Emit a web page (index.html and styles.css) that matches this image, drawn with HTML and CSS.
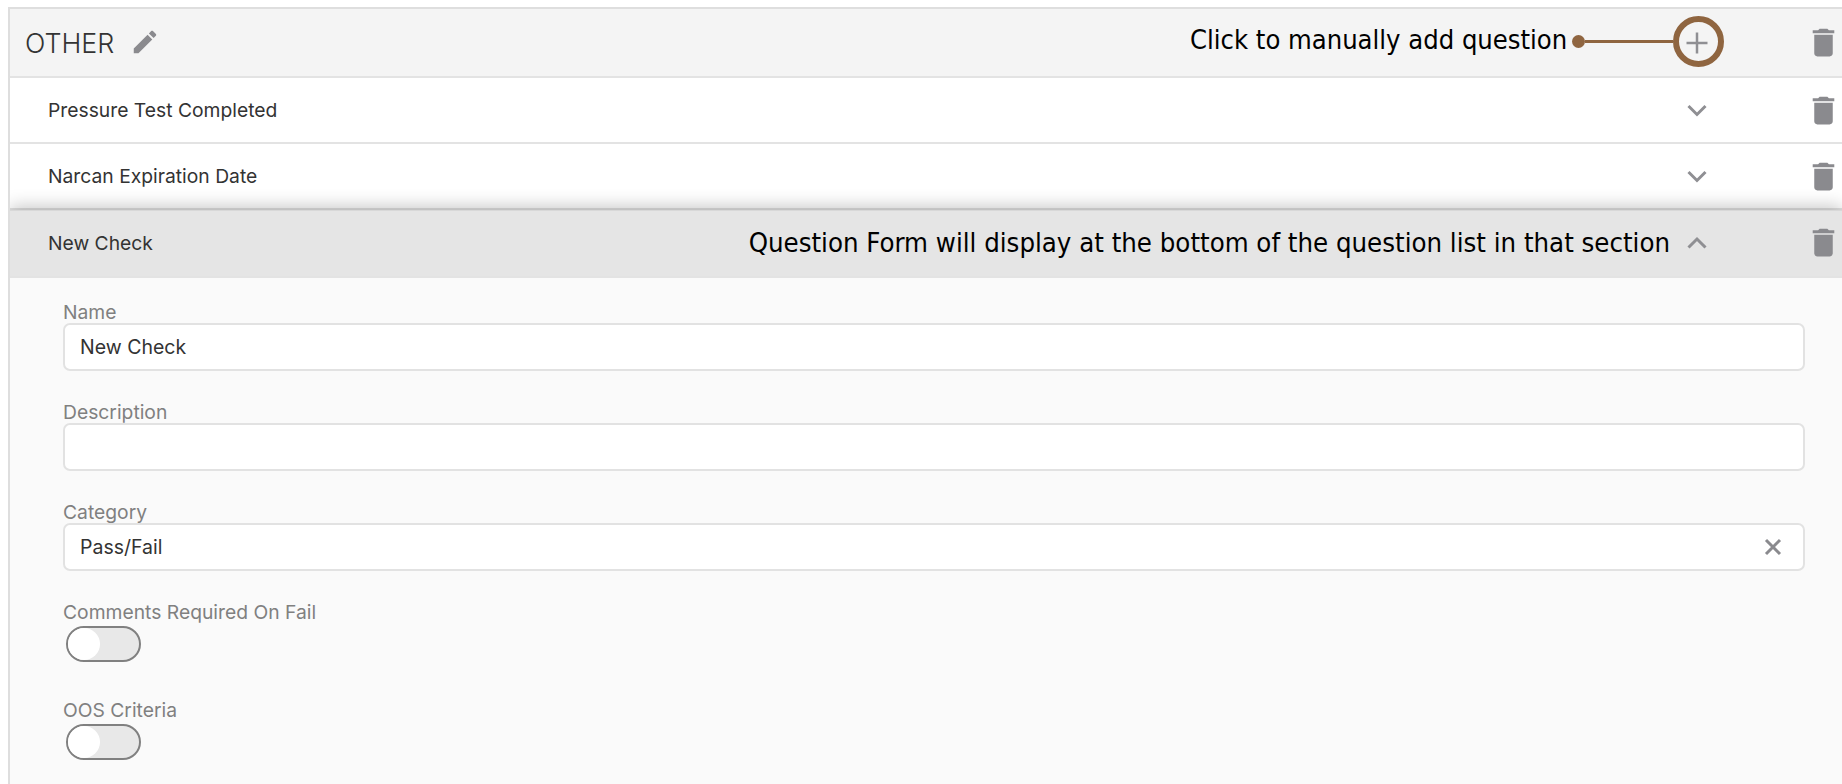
FILE: index.html
```html
<!DOCTYPE html>
<html lang="en">
<head>
    <meta charset="UTF-8">
    <title>Other section</title>
    <link rel="stylesheet" href="styles.css">
</head>
<body>
    <div class="section">
        <!-- Section header -->
        <div class="row row-head">
            <span class="head-title">OTHER</span>
            <svg class="icon-edit" viewBox="0 0 24 24"><path d="M3 17.25V21h3.75L17.81 9.94l-3.75-3.75L3 17.25zM20.71 7.04c.39-.39.39-1.02 0-1.41l-2.34-2.34c-.39-.39-1.02-.39-1.41 0l-1.83 1.83 3.75 3.75 1.83-1.83z"/></svg>
            <span class="spacer"></span>
            <svg class="slot" viewBox="0 0 36 36"><path class="stroke thin" d="M18 7.5v21M7.5 18h21"/></svg>
            <svg class="trash" viewBox="0 0 24 24"><path d="M6 19c0 1.1.9 2 2 2h8c1.1 0 2-.9 2-2V7H6v12zM19 4h-3.5l-1-1h-5l-1 1H5v2h14V4z"/></svg>
        </div>

        <!-- Questions -->
        <div class="row">
            <span class="row-title">Pressure Test Completed</span>
            <span class="spacer"></span>
            <svg class="slot" viewBox="0 0 36 36"><path class="stroke" d="M9.5 14l8.500 8.500 8.500-8.500"/></svg>
            <svg class="trash" viewBox="0 0 24 24"><path d="M6 19c0 1.1.9 2 2 2h8c1.1 0 2-.9 2-2V7H6v12zM19 4h-3.5l-1-1h-5l-1 1H5v2h14V4z"/></svg>
        </div>
        <div class="row">
            <span class="row-title">Narcan Expiration Date</span>
            <span class="spacer"></span>
            <svg class="slot" viewBox="0 0 36 36"><path class="stroke" d="M9.5 14l8.500 8.500 8.500-8.500"/></svg>
            <svg class="trash" viewBox="0 0 24 24"><path d="M6 19c0 1.1.9 2 2 2h8c1.1 0 2-.9 2-2V7H6v12zM19 4h-3.5l-1-1h-5l-1 1H5v2h14V4z"/></svg>
        </div>
        <div class="row row-open">
            <span class="row-title">New Check</span>
            <span class="spacer"></span>
            <span class="note">Question Form will display at the bottom of the question list in that section</span>
            <svg class="slot" viewBox="0 0 36 36"><path class="stroke" d="M9.500 22.500l8.500-8.500 8.500 8.500"/></svg>
            <svg class="trash" viewBox="0 0 24 24"><path d="M6 19c0 1.1.9 2 2 2h8c1.1 0 2-.9 2-2V7H6v12zM19 4h-3.5l-1-1h-5l-1 1H5v2h14V4z"/></svg>
        </div>

        <!-- Question form -->
        <div class="form">
            <div class="field">
                <label class="field-label">Name</label>
                <div class="input">New Check</div>
            </div>
            <div class="field">
                <label class="field-label">Description</label>
                <div class="input"></div>
            </div>
            <div class="field">
                <label class="field-label">Category</label>
                <div class="input">
                    <span class="spacer">Pass/Fail</span>
                    <svg class="icon-clear" viewBox="0 0 18 18"><path d="M2 2l14 14M16 2L2 16"/></svg>
                </div>
            </div>
            <div class="toggle-field">
                <label class="field-label">Comments Required On Fail</label>
                <div class="toggle"><span class="knob"></span></div>
            </div>
            <div class="toggle-field">
                <label class="field-label">OOS Criteria</label>
                <div class="toggle"><span class="knob"></span></div>
            </div>
        </div>
    </div>

    <!-- Callout over the add button -->
    <div class="callout">
        <span class="callout-text">Click to manually add question</span>
        <span class="callout-dot"></span>
        <span class="callout-line"></span>
        <span class="callout-ring"></span>
    </div>
</body>
</html>
```

FILE: styles.css
```css
html, body {
    height: 784px;
    overflow: hidden;
}
body {
    margin: 0;
    padding-top: 7px;
    box-sizing: border-box;
    position: relative;
    background: #fff;
    font-family: Inter, 'Noto Sans', sans-serif;
    color: #333;
}
.section {
    margin-left: 8px;
    border-left: 2px solid #dedede;
    border-top: 2px solid #dedede;
}
.row {
    display: flex;
    align-items: center;
    height: 64px;
    padding-left: 38px;
    border-bottom: 2px solid #e3e3e3;
    background: #fff;
}
.row-head {
    height: 67px;
    padding-left: 15px;
    background: #f4f4f4;
}
.row-open {
    position: relative;
    height: 63px;
    padding-bottom: 2px;
    background: #e5e5e5;
    border-top: 1px solid #d8d8d8;
    box-shadow: 0 -4px 16px rgba(0, 0, 0, 0.22);
    clip-path: inset(-30px 0 0 0); /* shadow only upward */
}
.head-title {
    font-size: 26.800px;
    font-weight: 300;
    color: #333;
}
.icon-edit {
    width: 30px;
    height: 30px;
    margin: 0 0 2px 16px;
    fill: #8a8a8e;
}
.row-title {
    font-size: 19.300px;
    color: #333;
}
.spacer {
    flex: 1;
}
.slot {
    width: 36px;
    height: 36px;
    flex: none;
    margin-right: 90px;
}
.stroke {
    fill: none;
    stroke: #8f8f93;
    stroke-width: 3;
}
.stroke.thin {
    stroke-width: 2.500;
}
.trash {
    width: 37px;
    height: 37px;
    flex: none;
    fill: #8a8a8e;
}
.note {
    margin-right: 9px;
    font-family: 'DejaVu Sans Condensed', 'DejaVu Sans', sans-serif;
    font-size: 27.300px;
    color: #000;
}
.form {
    box-sizing: border-box;
    height: 507px;
    overflow: hidden;
    padding: 23px 37px 0 53px;
    background: #fafafa;
}
.field {
    height: 100px;
}
.field-label {
    display: block;
    height: 22px;
    font-size: 19.300px;
    line-height: 23px;
    color: #808080;
}
.input {
    display: flex;
    align-items: center;
    box-sizing: border-box;
    height: 48px;
    padding: 0 21px 0 15px;
    border: 2px solid #e2e2e2;
    border-radius: 7px;
    background: #fff;
    font-size: 19.500px;
    color: #333;
}
.icon-clear {
    width: 18px;
    height: 18px;
    fill: none;
    stroke: #8a8a8e;
    stroke-width: 3;
}
.toggle-field {
    height: 98px;
}
.toggle-field .field-label {
    height: 25px;
}
.toggle {
    position: relative;
    box-sizing: border-box;
    width: 75px;
    height: 36px;
    margin-left: 3px;
    border: 2px solid #808080;
    border-radius: 18px;
    background: #e8e8e8;
}
.knob {
    position: absolute;
    top: 0;
    left: 0;
    width: 32px;
    height: 32px;
    border-radius: 50%;
    background: #fff;
}
.callout {
    position: absolute;
    top: 15px;
    left: 1190px;
    display: flex;
    align-items: center;
    height: 52px;
}
.callout-text {
    padding-bottom: 4px;
    font-family: 'DejaVu Sans Condensed', 'DejaVu Sans', sans-serif;
    font-size: 27.100px;
    color: #000;
}
.callout-dot {
    width: 13px;
    height: 13px;
    margin-left: 5px;
    border-radius: 50%;
    background: #8f6540;
}
.callout-line {
    width: 88px;
    height: 3px;
    background: #8f6540;
}
.callout-ring {
    box-sizing: border-box;
    width: 51px;
    height: 51px;
    border: 6px solid #8f6540;
    border-radius: 50%;
}
```
